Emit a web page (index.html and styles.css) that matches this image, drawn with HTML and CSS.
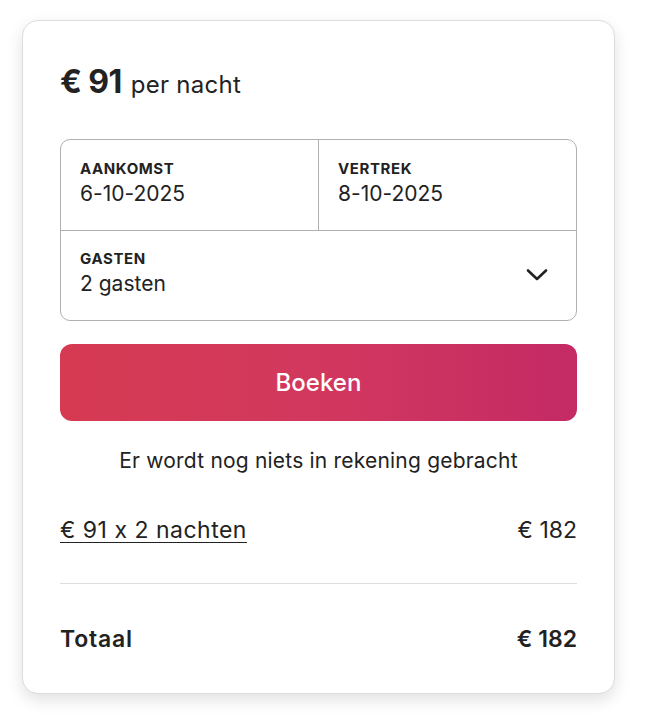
FILE: index.html
```html
<!DOCTYPE html>
<html lang="nl">
<head>
   <meta charset="UTF-8">
   <meta name="viewport" content="width=device-width, initial-scale=1.0">
   <title>Boeken</title>
   <link rel="stylesheet" href="styles.css">
</head>
<body>
   <div class="booking-card">
       <div class="booking-price">
           <span class="price-amount">€ 91</span>
           <span class="price-unit">per nacht</span>
       </div>

       <div class="booking-picker">
           <div class="picker-row">
               <div class="picker-cell">
                   <div class="picker-label">Aankomst</div>
                   <div class="picker-value">6-10-2025</div>
               </div>
               <div class="picker-cell picker-cell-right">
                   <div class="picker-label">Vertrek</div>
                   <div class="picker-value">8-10-2025</div>
               </div>
           </div>
           <div class="picker-guests">
               <div>
                   <div class="picker-label">Gasten</div>
                   <div class="picker-value">2 gasten</div>
               </div>
               <svg class="picker-chevron" width="22" height="14" viewBox="0 0 22 14" fill="none">
                   <path d="M2 2.5 L11 11 L20 2.5" stroke="#222" stroke-width="2.6" stroke-linecap="round" stroke-linejoin="round"/>
               </svg>
           </div>
       </div>

       <button class="booking-button">Boeken</button>

       <p class="booking-note">Er wordt nog niets in rekening gebracht</p>

       <div class="booking-line">
           <a class="line-label" href="#">€ 91 x 2 nachten</a>
           <span>€ 182</span>
       </div>

       <div class="booking-total">
           <span>Totaal</span>
           <span>€ 182</span>
       </div>
   </div>
</body>
</html>
```

FILE: styles.css
```css
:root {
    --text: #222222;
    --border: #b0b0b0;
    --divider: #dddddd;
    --white: #ffffff;
}

* {
    margin: 0;
    padding: 0;
    box-sizing: border-box;
}

body {
    background: var(--white);
    font-family: 'Inter', 'Liberation Sans', sans-serif;
    font-feature-settings: "calt" 0;
    color: var(--text);
    padding: 20px 33px 23px 22px;
}

.booking-card {
    width: 593px;
    background: var(--white);
    border: 1px solid #dddddd;
    border-radius: 16px;
    box-shadow: 0 6px 16px rgba(0,0,0,0.12);
    padding: 41px 37px 39px;
}

.booking-price {
    display: flex;
    align-items: baseline;
    gap: 9px;
    margin-bottom: 38px;
}

.price-amount {
    font-size: 32px;
    font-weight: 700;
    letter-spacing: -0.6px;
}

.price-unit {
    font-size: 24px;
    font-weight: 400;
    letter-spacing: 0.3px;
}

.booking-picker {
    border: 1px solid var(--border);
    border-radius: 10px;
    margin-bottom: 23px;
}

.picker-row {
    display: flex;
    border-bottom: 1px solid var(--border);
}

.picker-cell {
    flex: 1;
    height: 90px;
    padding: 19px 19px 0;
}

.picker-cell-right {
    border-left: 1px solid var(--border);
}

.picker-label {
    font-size: 15px;
    font-weight: 700;
    text-transform: uppercase;
    letter-spacing: 0.6px;
    line-height: 20px;
    margin-bottom: 2px;
}

.picker-value {
    font-size: 21px;
    line-height: 26px;
}

.picker-guests {
    display: flex;
    align-items: flex-start;
    justify-content: space-between;
    height: 89px;
    padding: 18px 28px 0 19px;
}

.picker-chevron {
    display: block;
    margin-top: 19px;
}

.booking-button {
    display: block;
    width: 100%;
    height: 77px;
    border: none;
    border-radius: 12px;
    background: linear-gradient(90deg, #d63a52 0%, #d2385e 50%, #c42a64 100%);
    color: var(--white);
    font-family: inherit;
    font-size: 24px;
    font-weight: 500;
    cursor: pointer;
}

.booking-note {
    text-align: center;
    font-size: 21px;
    letter-spacing: 0.2px;
    line-height: 26px;
    margin-top: 27px;
}

.booking-line {
    display: flex;
    justify-content: space-between;
    font-size: 23px;
    line-height: 30px;
    padding: 41px 0 38px;
    border-bottom: 1px solid var(--divider);
}

.line-label {
    color: var(--text);
    text-decoration: underline;
    text-decoration-thickness: 1px;
    text-underline-offset: 4px;
    letter-spacing: 0.5px;
}

.booking-total {
    display: flex;
    justify-content: space-between;
    font-size: 23px;
    font-weight: 600;
    line-height: 30px;
    padding-top: 40px;
}

.booking-total span:first-child {
    letter-spacing: 0.8px;
}
```
